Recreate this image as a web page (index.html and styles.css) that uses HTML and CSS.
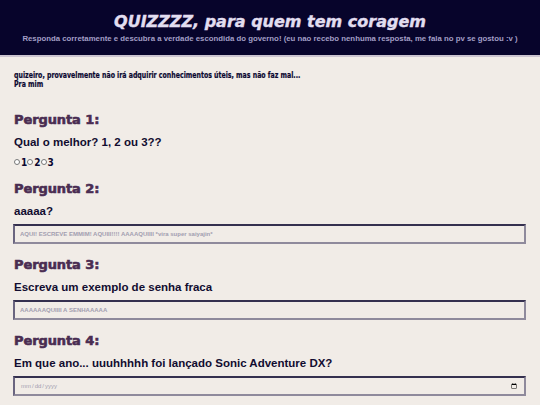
FILE: index.html
```html
<!DOCTYPE html>
<html lang="pt">
<head>
<meta charset="utf-8">
<title>Quiz</title>
<link rel="stylesheet" href="styles.css">
</head>
<body>
<header class="top">
  <h1 class="title">QUIZZZZ, para quem tem coragem</h1>
  <p class="subtitle">Responda corretamente e descubra a verdade escondida do governo! (eu nao recebo nenhuma resposta, me fala no pv se gostou :v )</p>
</header>
<main class="content">
  <p class="intro"><span class="intro-line">quizeiro, provavelmente não irá adquirir conhecimentos úteis, mas não faz mal...</span><span class="intro-line">Pra mim</span></p>

  <section class="q q1">
    <h2 class="qtitle">Pergunta 1:</h2>
    <p class="qtext">Qual o melhor? 1, 2 ou 3??</p>
    <div class="radios">
      <label class="opt"><input type="radio" name="r" class="radio">1</label>
      <label class="opt"><input type="radio" name="r" class="radio">2</label>
      <label class="opt"><input type="radio" name="r" class="radio">3</label>
    </div>
  </section>

  <section class="q">
    <h2 class="qtitle">Pergunta 2:</h2>
    <p class="qtext">aaaaa?</p>
    <input class="field" type="text" placeholder="AQUI! ESCREVE EMMIM! AQUIII!!!! AAAAQUIIII *vira super saiyajin*">
  </section>

  <section class="q">
    <h2 class="qtitle">Pergunta 3:</h2>
    <p class="qtext">Escreva um exemplo de senha fraca</p>
    <input class="field" type="text" placeholder="AAAAAAQUIIII A SENHAAAAA">
  </section>

  <section class="q">
    <h2 class="qtitle">Pergunta 4:</h2>
    <p class="qtext">Em que ano... uuuhhhhh foi lançado Sonic Adventure DX?</p>
    <input class="field date" type="date">
  </section>
</main>
</body>
</html>
```
FILE: styles.css
```css
html, body {
  margin: 0;
  padding: 0;
}
body {
  background: #f1ece7;
  font-family: "Liberation Sans", Arial, sans-serif;
  color: #0a0730;
}
.top {
  background: #07042b;
  height: 57px;
  border-bottom: 2px solid #cbc4cf;
  box-sizing: border-box;
  padding-top: 12px;
  text-align: center;
}
.title {
  margin: 0;
  font-family: "DejaVu Sans", sans-serif;
  font-weight: bold;
  font-style: italic;
  font-size: 16px;
  line-height: 20px;
  color: #e2def0;
  -webkit-text-stroke: 0.4px #e2def0;
}
.subtitle {
  margin: 2px 0 0;
  font-size: 7.8px;
  line-height: 10px;
  font-weight: bold;
  color: #a39fc6;
}
.content {
  padding: 14px 14px 0 13px;
}
.intro {
  margin: 0 0 0 1px;
  font-family: "DejaVu Sans Condensed", "DejaVu Sans", sans-serif;
  font-weight: bold;
  font-size: 9px;
  line-height: 9px;
  color: #0a0730;
}
.intro-line {
  display: block;
  width: 130%;
  white-space: nowrap;
  transform: scaleX(0.77);
  transform-origin: left center;
  -webkit-text-stroke: 0.2px #0a0730;
}
.q {
  margin-top: 12px;
}
.q1 {
  margin-top: 22px;
}
.qtitle {
  margin: 0 0 0 1px;
  font-family: "DejaVu Sans", sans-serif;
  font-weight: bold;
  font-size: 13px;
  letter-spacing: -0.1px;
  line-height: 18px;
  color: #4a2c52;
  -webkit-text-stroke: 0.6px #4a2c52;
}
.qtext {
  margin: 5px 0 0 1px;
  font-weight: bold;
  font-size: 11.5px;
  line-height: 16px;
  color: #120c30;
}
.radios {
  margin: 6px 0 0 1px;
  display: flex;
  align-items: center;
  height: 12px;
}
.opt {
  display: flex;
  align-items: center;
  font-family: "DejaVu Sans Condensed", "DejaVu Sans", sans-serif;
  font-weight: bold;
  font-size: 10px;
  color: #0a0730;
}
.radio {
  margin: 0 1px 0 0;
  width: 6px;
  height: 6px;
}
.field {
  display: block;
  margin-top: 5px;
  width: 100%;
  height: 20px;
  box-sizing: border-box;
  background: #f1ece7;
  border: 2px solid #8f8a9c;
  border-top-color: #35304f;
  border-left-color: #6a6580;
  padding: 0 5px;
  font-family: "Liberation Sans", Arial, sans-serif;
  font-weight: bold;
  font-size: 6px;
  color: #333;
}
.field::placeholder {
  color: #a29eb0;
}
.date {
  font-weight: normal;
  font-size: 6px;
  color: #a29eb0;
}
```
